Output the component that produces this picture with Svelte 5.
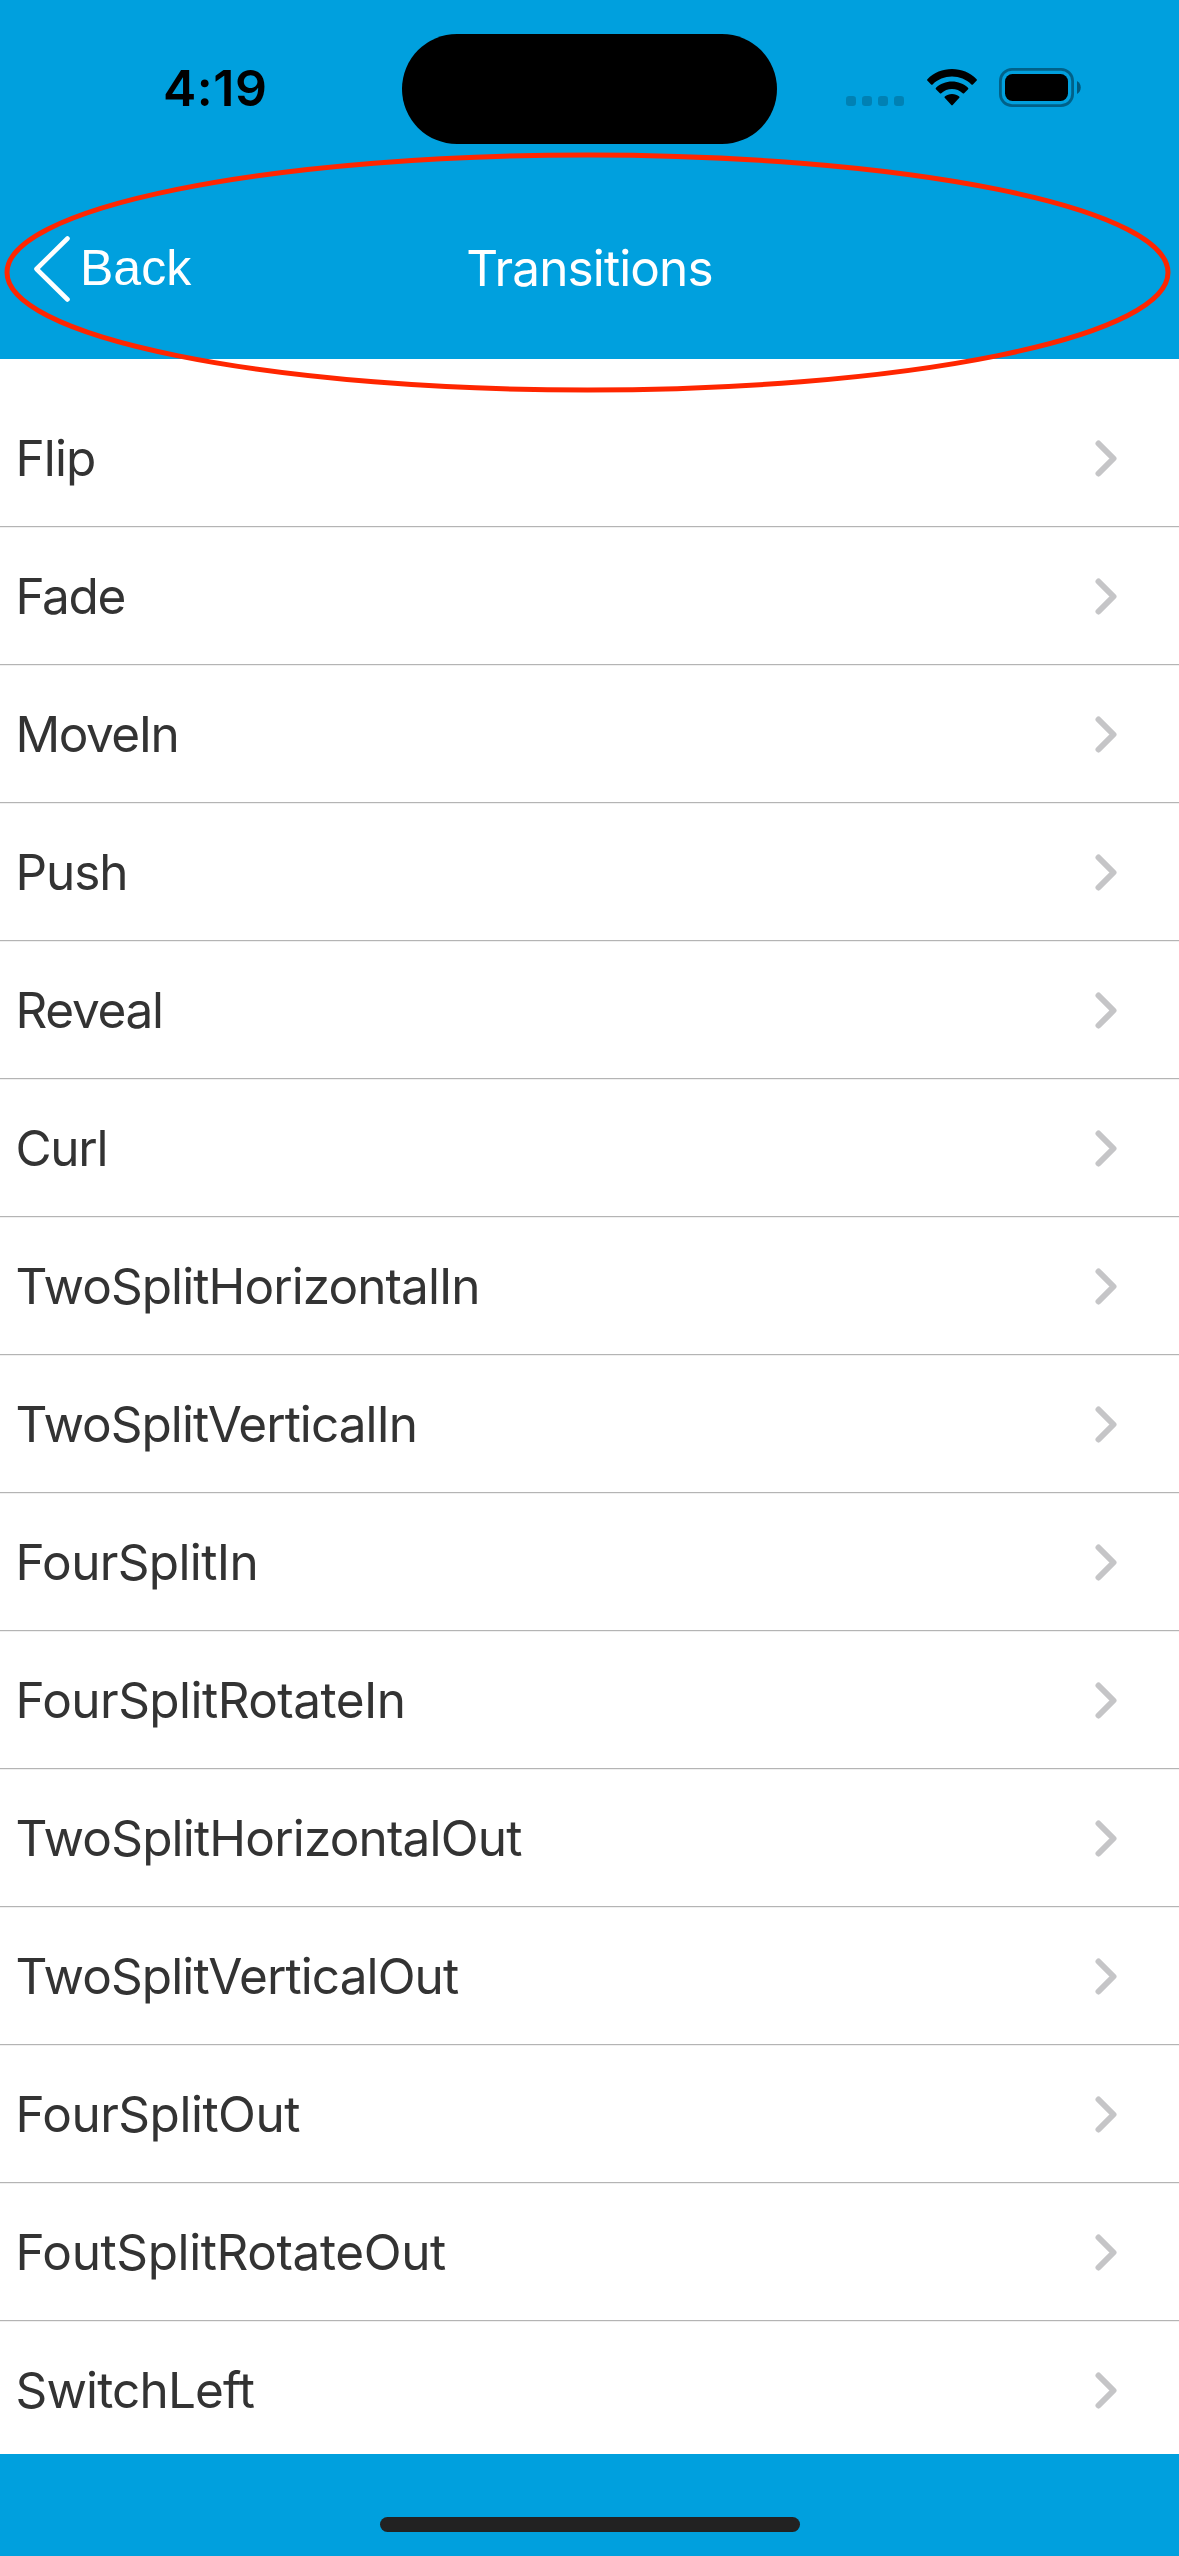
<script>
  // Each entry carries its own tracking, in pixels.
  const items = [
    { label: 'Flip', tracking: -0.9 },
    { label: 'Fade', tracking: -1.4 },
    { label: 'MoveIn', tracking: -1.5 },
    { label: 'Push', tracking: -1.1 },
    { label: 'Reveal', tracking: -1.3 },
    { label: 'Curl', tracking: -1.3 },
    { label: 'TwoSplitHorizontalIn', tracking: -0.92 },
    { label: 'TwoSplitVerticalIn', tracking: -0.97 },
    { label: 'FourSplitIn', tracking: -0.65 },
    { label: 'FourSplitRotateIn', tracking: -0.55 },
    { label: 'TwoSplitHorizontalOut', tracking: -0.82 },
    { label: 'TwoSplitVerticalOut', tracking: -0.9 },
    { label: 'FourSplitOut', tracking: -0.5 },
    { label: 'FoutSplitRotateOut', tracking: -0.4 },
    { label: 'SwitchLeft', tracking: -0.85 }
  ];
</script>

<div class="screen">
  <header>
    <div class="status">
      <span class="time">4:19</span>
      <div class="island"></div>
      <div class="indicators">
        <svg class="dots" width="58" height="10" viewBox="0 0 58 10">
          {#each [0, 16, 32, 48] as x}
            <rect {x} y="0" width="10" height="10" rx="3.2" />
          {/each}
        </svg>
        <svg class="wifi" width="50" height="37" viewBox="0 0 50 37">
          <path d="M.4 10.2C7 3.6 15.600 0 25 0s18 3.600 24.600 10.200c.5.500.5 1 .1 1.400l-3.800 3.800c-.5.500-1 .5-1.500 0C39.200 10.500 32.400 7.600 25 7.600S10.800 10.500 5.600 15.400c-.5.500-1 .5-1.500 0L.3 11.600c-.4-.4-.4-.9.100-1.400z" />
          <path d="M9 18.800C13.300 14.900 18.900 12.600 25 12.600s11.700 2.300 16 6.200c.5.500.5 1 .1 1.400l-4 4c-.4.400-.9.400-1.400 0C32.800 21.700 29.100 20.100 25 20.100s-7.800 1.600-10.700 4.100c-.5.400-1 .4-1.400 0l-4-4c-.4-.4-.4-.9.100-1.400z" />
          <path d="M17.800 27.400C19.700 25.800 22.200 24.900 25 24.900s5.300.9 7.200 2.500c.5.400.5.900.1 1.300l-6.600 7.300c-.5.600-.9.600-1.400 0l-6.600-7.300c-.4-.4-.4-.9.100-1.300z" />
        </svg>
        <svg class="battery" width="82" height="39" viewBox="0 0 82 39">
          <rect class="case" x="1.400" y="1.400" width="72.200" height="36.200" rx="11.600" />
          <rect x="6" y="6" width="63" height="27" rx="7.500" />
          <path class="nub" d="M78 13c5 2.600 5 10.400 0 13z" />
        </svg>
      </div>
    </div>
    <nav>
      <button class="back">
        <svg width="36" height="66" viewBox="0 0 36 66">
          <path d="M33.500 2.500L2.500 33l31 30.500" />
        </svg>
        <span>Back</span>
      </button>
      <h1>Transitions</h1>
    </nav>
    <svg class="highlight" width="1179" height="400" viewBox="0 0 1179 400">
      <ellipse cx="587.5" cy="272.5" rx="580.5" ry="117.5" />
    </svg>
  </header>
  <ul>
    {#each items as item}
      <li>
        <span style:letter-spacing="{item.tracking}px">{item.label}</span>
        <svg width="22" height="37" viewBox="0 0 22 37">
          <path d="M3.500 3.500l15 15-15 15" />
        </svg>
      </li>
    {/each}
  </ul>
  <footer><div class="home"></div></footer>
</div>

<style>
  :global(body) {
    margin: 0;
  }
  .screen {
    width: 1179px;
    height: 2556px;
    display: flex;
    flex-direction: column;
    overflow: hidden;
    background: #fff;
    font-family: Inter, 'Liberation Sans', sans-serif;
  }
  header {
    position: relative;
    flex: none;
    height: 359px;
    background: #00a0de;
  }
  .status {
    height: 178px;
    display: grid;
    grid-template-columns: 402px 375px 402px;
  }
  .time {
    padding: 58px 0 0 163px;
    font-size: 50px;
    line-height: 60px;
    font-weight: 600;
    letter-spacing: 0.5px;
    color: #000;
  }
  .island {
    margin-top: 34px;
    height: 110px;
    border-radius: 55px;
    background: #000;
  }
  .indicators {
    display: flex;
    align-items: flex-start;
    padding: 68px 0 0 69px;
  }
  .dots {
    margin-top: 28px;
    fill: #0081b4;
  }
  .wifi {
    margin: 1px 22px 0 23px;
  }
  .case {
    fill: none;
    stroke: #006189;
    stroke-width: 2.8;
  }
  .nub {
    fill: #00587e;
  }
  nav {
    height: 180px;
    display: grid;
    grid-template-columns: 400px 379px 400px;
    align-items: center;
    color: #fff;
  }
  .back {
    display: flex;
    align-items: center;
    gap: 10px;
    margin-top: 2px;
    padding: 0 0 0 34px;
    border: 0;
    background: none;
    color: inherit;
    font: 50px/60px 'Liberation Sans', sans-serif;
  }
  .back span {
    margin-bottom: 3px;
  }
  .back path {
    fill: none;
    stroke: #fff;
    stroke-width: 4.6;
    stroke-linecap: round;
    stroke-linejoin: round;
  }
  h1 {
    margin: 0;
    text-align: center;
    font-size: 49.5px;
    line-height: 60px;
    font-weight: 400;
    letter-spacing: -0.9px;
  }
  .highlight {
    position: absolute;
    top: 0;
    left: 0;
    fill: none;
    stroke: #ff2600;
    stroke-width: 5;
    pointer-events: none;
  }
  ul {
    flex: 1;
    min-height: 0;
    margin: 0;
    padding: 30px 0 0;
    list-style: none;
    overflow: hidden;
  }
  li {
    box-sizing: border-box;
    height: 138px;
    padding: 0 62px 0 15.5px;
    display: flex;
    align-items: center;
    justify-content: space-between;
    border-bottom: 1px solid #b4b4b4;
    box-shadow: 0 1px #f0f0f0;
    font-size: 49.5px;
    line-height: 60px;
    color: #333;
  }
  li svg {
    margin-top: 2px;
  }
  li path {
    fill: none;
    stroke: #c5c5c7;
    stroke-width: 6;
    stroke-linecap: round;
    stroke-linejoin: round;
  }
  footer {
    flex: none;
    height: 102px;
    display: flex;
    justify-content: center;
    background: #00a0de;
  }
  .home {
    width: 420px;
    height: 15px;
    margin-top: 63px;
    border-radius: 8px;
    background: #222;
  }
</style>
